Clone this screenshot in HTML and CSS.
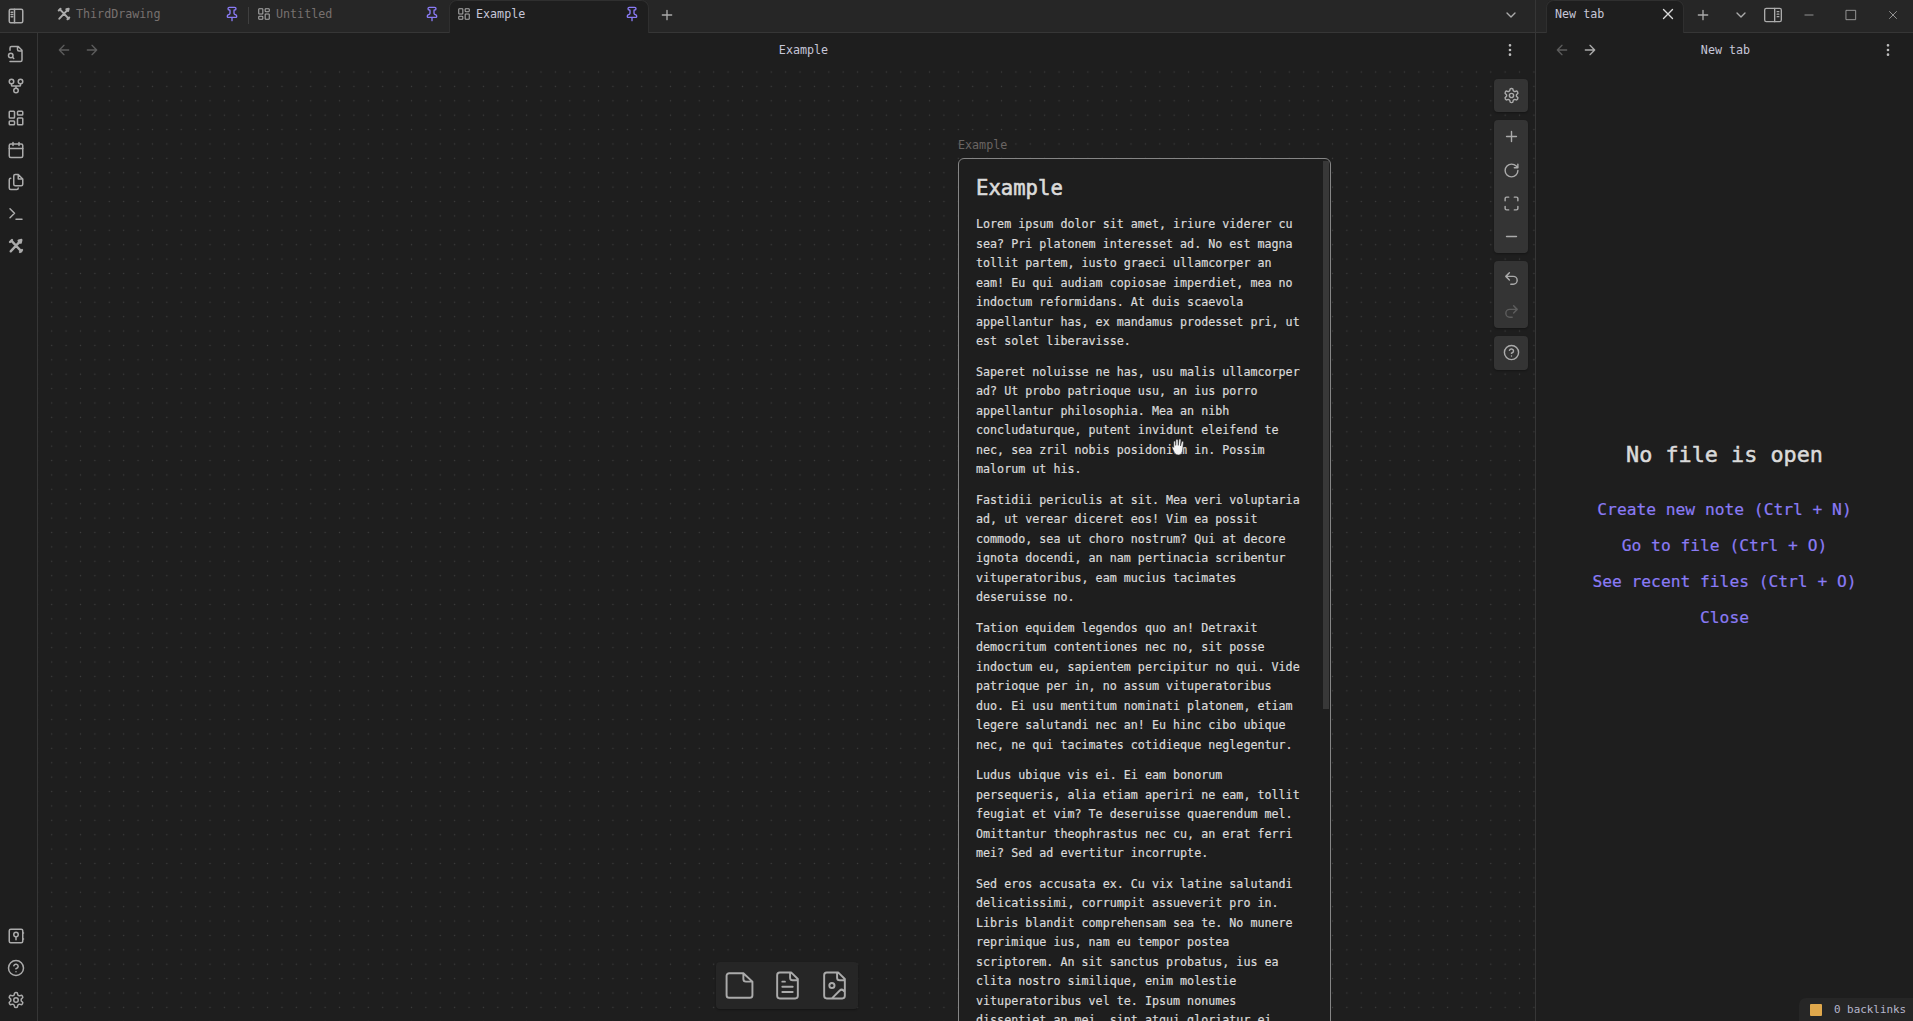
FILE: index.html
```html
<!DOCTYPE html>
<html lang="en">
<head>
    <meta charset="UTF-8">
    <title>Example</title>
    <link rel="stylesheet" href="styles.css">
</head>
<body>
<svg class="defs" width="0" height="0">
    <symbol id="i-sidebar" viewBox="0 0 24 24"><rect x="3" y="3" width="18" height="18" rx="2"/><path d="M10 3v18M5.500 7h2M5.500 10h2M5.500 13h2"/></symbol>
    <symbol id="i-sidebar-r" viewBox="0 0 24 24"><rect x="2" y="4" width="20" height="16" rx="2"/><path d="M14 4v16M17 8h2M17 11h2M17 14h2"/></symbol>
    <symbol id="i-draw" viewBox="0 0 24 24"><path d="M5 4l15 16M19 4L4 20M3 6l3-3M18 21l3-3M16 4l4-1-1 4"/></symbol>
    <symbol id="i-dash" viewBox="0 0 24 24"><rect x="3" y="3" width="7" height="9" rx="1"/><rect x="14" y="3" width="7" height="5" rx="1"/><rect x="14" y="12" width="7" height="9" rx="1"/><rect x="3" y="16" width="7" height="5" rx="1"/></symbol>
    <symbol id="i-pin" viewBox="0 0 24 24"><path d="M12 17v5M9 10.760a2 2 0 0 1-1.110 1.790l-1.780.9A2 2 0 0 0 5 15.240V16a1 1 0 0 0 1 1h12a1 1 0 0 0 1-1v-.76a2 2 0 0 0-1.110-1.790l-1.780-.9A2 2 0 0 1 15 10.760V7a1 1 0 0 1 1-1 2 2 0 0 0 0-4H8a2 2 0 0 0 0 4 1 1 0 0 1 1 1z"/></symbol>
    <symbol id="i-plus" viewBox="0 0 24 24"><path d="M5 12h14M12 5v14"/></symbol>
    <symbol id="i-minus" viewBox="0 0 24 24"><path d="M5 12h14"/></symbol>
    <symbol id="i-x" viewBox="0 0 24 24"><path d="M18 6L6 18M6 6l12 12"/></symbol>
    <symbol id="i-square" viewBox="0 0 24 24"><rect x="4" y="4" width="16" height="16"/></symbol>
    <symbol id="i-chevron" viewBox="0 0 24 24"><path d="M6 9l6 6 6-6"/></symbol>
    <symbol id="i-left" viewBox="0 0 24 24"><path d="M12 19l-7-7 7-7M19 12H5"/></symbol>
    <symbol id="i-right" viewBox="0 0 24 24"><path d="M5 12h14M12 5l7 7-7 7"/></symbol>
    <symbol id="i-more" viewBox="0 0 24 24"><circle cx="12" cy="5" r="1"/><circle cx="12" cy="12" r="1"/><circle cx="12" cy="19" r="1"/></symbol>
    <symbol id="i-filesearch" viewBox="0 0 24 24"><path d="M4 22h14a2 2 0 0 0 2-2V7l-5-5H6a2 2 0 0 0-2 2v3M14 2v4a2 2 0 0 0 2 2h4M9 18l-1.500-1.500"/><circle cx="5" cy="14" r="3"/></symbol>
    <symbol id="i-fork" viewBox="0 0 24 24"><circle cx="12" cy="18" r="3"/><circle cx="6" cy="6" r="3"/><circle cx="18" cy="6" r="3"/><path d="M18 9v2c0 .6-.4 1-1 1H7c-.6 0-1-.4-1-1V9M12 12v3"/></symbol>
    <symbol id="i-calendar" viewBox="0 0 24 24"><path d="M8 2v4M16 2v4M3 10h18"/><rect x="3" y="4" width="18" height="18" rx="2"/></symbol>
    <symbol id="i-copy" viewBox="0 0 24 24"><path d="M15 2h-4a2 2 0 0 0-2 2v11a2 2 0 0 0 2 2h8a2 2 0 0 0 2-2V8zM15 2v6h6M5 7a2 2 0 0 0-2 2v11a2 2 0 0 0 2 2h8a2 2 0 0 0 2-2"/></symbol>
    <symbol id="i-terminal" viewBox="0 0 24 24"><path d="M4 17l6-6-6-6M12 19h8"/></symbol>
    <symbol id="i-vault" viewBox="0 0 24 24"><rect x="3" y="3" width="18" height="18" rx="2"/><circle cx="12" cy="10" r="3"/><path d="M12 13v4M21 8h1M21 16h1"/></symbol>
    <symbol id="i-help" viewBox="0 0 24 24"><circle cx="12" cy="12" r="10"/><path d="M9.090 9a3 3 0 0 1 5.830 1c0 2-3 3-3 3M12 17h.01"/></symbol>
    <symbol id="i-gear" viewBox="0 0 24 24"><path d="M12.220 2h-.44a2 2 0 0 0-2 2v.18a2 2 0 0 1-1 1.730l-.43.25a2 2 0 0 1-2 0l-.15-.08a2 2 0 0 0-2.730.73l-.22.38a2 2 0 0 0 .73 2.730l.15.1a2 2 0 0 1 1 1.720v.51a2 2 0 0 1-1 1.740l-.15.09a2 2 0 0 0-.73 2.730l.22.38a2 2 0 0 0 2.730.73l.15-.08a2 2 0 0 1 2 0l.43.25a2 2 0 0 1 1 1.730V20a2 2 0 0 0 2 2h.44a2 2 0 0 0 2-2v-.18a2 2 0 0 1 1-1.730l.43-.25a2 2 0 0 1 2 0l.15.08a2 2 0 0 0 2.730-.73l.22-.39a2 2 0 0 0-.73-2.730l-.15-.08a2 2 0 0 1-1-1.740v-.5a2 2 0 0 1 1-1.740l.15-.09a2 2 0 0 0 .73-2.730l-.22-.38a2 2 0 0 0-2.730-.73l-.15.08a2 2 0 0 1-2 0l-.43-.25a2 2 0 0 1-1-1.730V4a2 2 0 0 0-2-2z"/><circle cx="12" cy="12" r="3"/></symbol>
    <symbol id="i-rotate" viewBox="0 0 24 24"><path d="M21 12a9 9 0 1 1-9-9c2.520 0 4.930 1 6.740 2.740L21 8M21 3v5h-5"/></symbol>
    <symbol id="i-fit" viewBox="0 0 24 24"><path d="M8 3H5a2 2 0 0 0-2 2v3M21 8V5a2 2 0 0 0-2-2h-3M3 16v3a2 2 0 0 0 2 2h3M16 21h3a2 2 0 0 0 2-2v-3"/></symbol>
    <symbol id="i-undo" viewBox="0 0 24 24"><path d="M9 14L4 9l5-5M4 9h10.500a5.500 5.500 0 0 1 5.500 5.500 5.500 5.500 0 0 1-5.500 5.500H11"/></symbol>
    <symbol id="i-redo" viewBox="0 0 24 24"><path d="M15 14l5-5-5-5M20 9H9.500A5.500 5.500 0 0 0 4 14.500 5.500 5.500 0 0 0 9.500 20H13"/></symbol>
    <symbol id="i-file" viewBox="0 0 24 24"><path d="M15 2.500H4a2 2 0 0 0-2 2v15a2 2 0 0 0 2 2h16a2 2 0 0 0 2-2V9zM15 2.500V7a2 2 0 0 0 2 2h5"/></symbol>
    <symbol id="i-filetext" viewBox="0 0 24 24"><path d="M15 2H6a2 2 0 0 0-2 2v16a2 2 0 0 0 2 2h12a2 2 0 0 0 2-2V7zM14 2v4a2 2 0 0 0 2 2h4M10 9H8M16 13H8M16 17H8"/></symbol>
    <symbol id="i-fileimage" viewBox="0 0 24 24"><path d="M15 2H6a2 2 0 0 0-2 2v16a2 2 0 0 0 2 2h12a2 2 0 0 0 2-2V7zM14 2v4a2 2 0 0 0 2 2h4M20 17l-1.090-1.090a2 2 0 0 0-2.820 0L10 22"/><circle cx="10" cy="12" r="2"/></symbol>
</svg>

<div class="app">
    <div class="main-col">
        <div class="tabbar">
            <div class="tabbar-toggle"><svg class="ico ico-18"><use href="#i-sidebar"/></svg></div>
            <div class="tab">
                <svg class="ico tab-ico thick"><use href="#i-draw"/></svg>
                <span class="tab-name dim">ThirdDrawing</span>
                <svg class="ico ico-16 pin"><use href="#i-pin"/></svg>
            </div>
            <div class="tab tab-sep">
                <svg class="ico tab-ico"><use href="#i-dash"/></svg>
                <span class="tab-name dim">Untitled</span>
                <svg class="ico ico-16 pin"><use href="#i-pin"/></svg>
            </div>
            <div class="tab active">
                <svg class="ico tab-ico"><use href="#i-dash"/></svg>
                <span class="tab-name">Example</span>
                <svg class="ico ico-16 pin"><use href="#i-pin"/></svg>
            </div>
            <div class="tab-add"><svg class="ico ico-16"><use href="#i-plus"/></svg></div>
            <div class="tabbar-end"><svg class="ico ico-16"><use href="#i-chevron"/></svg></div>
        </div>
        <div class="main-body">
            <div class="ribbon">
                <div class="ribbon-group">
                    <div class="ribbon-btn"><svg class="ico ico-18"><use href="#i-filesearch"/></svg></div>
                    <div class="ribbon-btn"><svg class="ico ico-18"><use href="#i-fork"/></svg></div>
                    <div class="ribbon-btn"><svg class="ico ico-18"><use href="#i-dash"/></svg></div>
                    <div class="ribbon-btn"><svg class="ico ico-18"><use href="#i-calendar"/></svg></div>
                    <div class="ribbon-btn"><svg class="ico ico-18"><use href="#i-copy"/></svg></div>
                    <div class="ribbon-btn"><svg class="ico ico-18"><use href="#i-terminal"/></svg></div>
                    <div class="ribbon-btn"><svg class="ico ico-16 thick"><use href="#i-draw"/></svg></div>
                </div>
                <div class="ribbon-group">
                    <div class="ribbon-btn"><svg class="ico ico-18"><use href="#i-vault"/></svg></div>
                    <div class="ribbon-btn"><svg class="ico ico-18"><use href="#i-help"/></svg></div>
                    <div class="ribbon-btn"><svg class="ico ico-18"><use href="#i-gear"/></svg></div>
                </div>
            </div>
            <div class="view main-view">
                <div class="view-head">
                    <div class="nav">
                        <svg class="ico ico-16 faint"><use href="#i-left"/></svg>
                        <svg class="ico ico-16 faint"><use href="#i-right"/></svg>
                    </div>
                    <div class="view-title">Example</div>
                    <svg class="ico ico-16 more"><use href="#i-more"/></svg>
                </div>
                <div class="canvas">
                    <div class="node">
                        <div class="node-label">Example</div>
                        <div class="card">
                            <div class="scroll-thumb"></div>
                            <h1>Example</h1>
                            <p>Lorem ipsum dolor sit amet, iriure viderer cu sea? Pri platonem interesset ad. No est magna tollit partem, iusto graeci ullamcorper an eam! Eu qui audiam copiosae imperdiet, mea no indoctum reformidans. At duis scaevola appellantur has, ex mandamus prodesset pri, ut est solet liberavisse.</p>
                            <p>Saperet noluisse ne has, usu malis ullamcorper ad? Ut probo patrioque usu, an ius porro appellantur philosophia. Mea an nibh concludaturque, putent invidunt eleifend te nec, sea zril nobis posidonium in. Possim malorum ut his.</p>
                            <p>Fastidii periculis at sit. Mea veri voluptaria ad, ut verear diceret eos! Vim ea possit commodo, sea ut choro nostrum? Qui at decore ignota docendi, an nam pertinacia scribentur vituperatoribus, eam mucius tacimates deseruisse no.</p>
                            <p>Tation equidem legendos quo an! Detraxit democritum contentiones nec no, sit posse indoctum eu, sapientem percipitur no qui. Vide patrioque per in, no assum vituperatoribus duo. Ei usu mentitum nominati platonem, etiam legere salutandi nec an! Eu hinc cibo ubique nec, ne qui tacimates cotidieque neglegentur.</p>
                            <p>Ludus ubique vis ei. Ei eam bonorum persequeris, alia etiam aperiri ne eam, tollit feugiat et vim? Te deseruisse quaerendum mel. Omittantur theophrastus nec cu, an erat ferri mei? Sed ad evertitur incorrupte.</p>
                            <p>Sed eros accusata ex. Cu vix latine salutandi delicatissimi, corrumpit assueverit pro in. Libris blandit comprehensam sea te. No munere reprimique ius, nam eu tempor postea scriptorem. An sit sanctus probatus, ius ea clita nostro similique, enim molestie vituperatoribus vel te. Ipsum nonumes dissentiet an mei, sint atqui gloriatur ei</p>
                        </div>
                    </div>

                    <div class="controls">
                        <div class="ctrl-group"><div class="ctrl"><svg class="ico ico-17"><use href="#i-gear"/></svg></div></div>
                        <div class="ctrl-group">
                            <div class="ctrl"><svg class="ico ico-17"><use href="#i-plus"/></svg></div>
                            <div class="ctrl"><svg class="ico ico-17"><use href="#i-rotate"/></svg></div>
                            <div class="ctrl"><svg class="ico ico-17"><use href="#i-fit"/></svg></div>
                            <div class="ctrl"><svg class="ico ico-17"><use href="#i-minus"/></svg></div>
                        </div>
                        <div class="ctrl-group">
                            <div class="ctrl ctrl-half"><svg class="ico ico-17"><use href="#i-undo"/></svg></div>
                            <div class="ctrl ctrl-half"><svg class="ico ico-17 faint"><use href="#i-redo"/></svg></div>
                        </div>
                        <div class="ctrl-group"><div class="ctrl"><svg class="ico ico-17"><use href="#i-help"/></svg></div></div>
                    </div>

                    <div class="cards-bar">
                        <svg class="ico ico-31"><use href="#i-file"/></svg>
                        <svg class="ico ico-31"><use href="#i-filetext"/></svg>
                        <svg class="ico ico-31"><use href="#i-fileimage"/></svg>
                    </div>

                    <svg class="hand" viewBox="0 0 14 17">
                        <path d="M2.500 7V3.500a1 1 0 0 1 1.800 0V7l.3-5.200a1 1 0 0 1 1.900 0L6.800 7l.6-5.500a1 1 0 0 1 1.900.2L8.900 7.500l1-4a1 1 0 0 1 1.800.4L10.900 11c-.2 2.500-1.300 5-4 5-2.500 0-3.500-1.500-4.400-3.500L1 9.500c-.4-1 1-1.700 1.500-.6z"/>
                    </svg>
                </div>
            </div>
        </div>
    </div>

    <div class="side-col">
        <div class="tabbar tabbar-side">
            <div class="tab active tab-new">
                <span class="tab-name">New tab</span>
                <svg class="ico ico-18 tab-close"><use href="#i-x"/></svg>
            </div>
            <div class="win-btns">
                <svg class="ico ico-16"><use href="#i-plus"/></svg>
                <svg class="ico ico-16 win-chevron"><use href="#i-chevron"/></svg>
                <svg class="ico ico-20 win-panel"><use href="#i-sidebar-r"/></svg>
                <svg class="ico ico-14 thin win-min"><use href="#i-minus"/></svg>
                <svg class="ico ico-14 thin win-max"><use href="#i-square"/></svg>
                <svg class="ico ico-14 thin win-max"><use href="#i-x"/></svg>
            </div>
        </div>
        <div class="view side-view">
            <div class="view-head">
                <div class="nav">
                    <svg class="ico ico-16 faint"><use href="#i-left"/></svg>
                    <svg class="ico ico-16"><use href="#i-right"/></svg>
                </div>
                <div class="view-title">New tab</div>
                <svg class="ico ico-16 more"><use href="#i-more"/></svg>
            </div>
            <div class="empty">
                <div class="empty-title">No file is open</div>
                <a class="empty-link">Create new note (Ctrl + N)</a>
                <a class="empty-link">Go to file (Ctrl + O)</a>
                <a class="empty-link">See recent files (Ctrl + O)</a>
                <a class="empty-link">Close</a>
            </div>
            <div class="status"><span class="status-square"></span>0 backlinks</div>
        </div>
    </div>
</div>
</body>
</html>
```

FILE: styles.css
```css
* {
    box-sizing: border-box;
}
html, body {
    margin: 0;
    height: 100%;
    overflow: hidden;
}
body {
    background: #1e1e1e;
    color: #dadada;
    font-family: "DejaVu Sans Mono", "Liberation Mono", monospace;
    font-size: 11.700px;
}
.defs {
    position: absolute;
}

/* icons */
.ico {
    display: block;
    flex: none;
    fill: none;
    stroke: #ababab;
    stroke-width: 2;
    stroke-linecap: round;
    stroke-linejoin: round;
}
.ico-14 { width: 14px; height: 14px; }
.ico-16 { width: 16px; height: 16px; }
.ico-17 { width: 17px; height: 17px; }
.ico-18 { width: 18px; height: 18px; }
.ico-20 { width: 20px; height: 20px; stroke-width: 1.600; }
.ico-31 { width: 31px; height: 31px; stroke-width: 1.500; }
.thick { stroke-width: 3.500; }
.thin { stroke-width: 1.400; }
.faint { stroke: #5c5c5c; }
.pin { stroke: #8a7bf5; }

.app {
    display: flex;
    height: 100vh;
}
.main-col {
    width: 1536px;
    display: flex;
    flex-direction: column;
    border-right: 1px solid #363636;
}
.side-col {
    flex: 1;
    min-width: 0;
    display: flex;
    flex-direction: column;
}

/* tabs */
.tabbar {
    height: 33px;
    flex: none;
    display: flex;
    align-items: flex-end;
    background: #262626;
    border-bottom: 1px solid #363636;
}
.tabbar-toggle {
    width: 32px;
    height: 32px;
    display: flex;
    align-items: center;
    justify-content: center;
    margin-right: 17px;
}
.tab {
    width: 200px;
    height: 33px;
    margin-bottom: -1px;
    padding: 0 9px 5px 8px;
    display: flex;
    align-items: center;
    gap: 5px;
    position: relative;
}
.tab-ico {
    width: 14px;
    height: 14px;
    stroke-width: 1.800;
}
.tab-ico.thick {
    stroke-width: 3.500;
}
.tab-name {
    flex: 1;
    min-width: 0;
    color: #c6c6d8;
}
.tab-name.dim {
    color: #77716f;
}
.tab-sep::before {
    content: "";
    position: absolute;
    left: -1px;
    top: 7px;
    height: 17px;
    border-left: 1px solid #3f3f3f;
}
.tab.active {
    background: #1e1e1e;
    border-radius: 8px 8px 0 0;
    box-shadow: inset 1px 0 0 #2f2f2f, inset -1px 0 0 #2f2f2f, inset 0 1px 0 #2f2f2f;
}
.tab-add {
    width: 36px;
    height: 32px;
    padding-bottom: 2px;
    display: flex;
    align-items: center;
    justify-content: center;
}
.tabbar-end {
    margin-left: auto;
    width: 48px;
    height: 32px;
    padding-bottom: 2px;
    display: flex;
    align-items: center;
    justify-content: center;
}
.tabbar-side {
    padding-left: 10px;
}
.tab-new {
    width: 138px;
    padding: 0 7px 5px 9px;
}
.tab-close {
    stroke: #dadada;
    stroke-width: 1.800;
}
.win-btns {
    flex: 1;
    height: 32px;
    padding: 0 0 3px 11px;
    display: flex;
    align-items: center;
}
.win-chevron { margin-left: 22px; }
.win-panel { margin-left: 14px; }
.win-min { margin-left: 19px; }
.win-max { margin-left: 28px; }

/* ribbon */
.main-body {
    flex: 1;
    min-height: 0;
    display: flex;
}
.ribbon {
    width: 38px;
    flex: none;
    display: flex;
    flex-direction: column;
    justify-content: space-between;
    padding: 5px 0;
    border-right: 1px solid #363636;
}
.ribbon-btn {
    height: 32px;
    padding-right: 5px;
    display: flex;
    align-items: center;
    justify-content: center;
}

/* views */
.view {
    flex: 1;
    min-width: 0;
    display: flex;
    flex-direction: column;
    position: relative;
}
.view-head {
    height: 34px;
    flex: none;
    padding: 0 17px 0 18px;
    display: flex;
    align-items: center;
}
.nav {
    display: flex;
    gap: 12px;
}
.view-title {
    flex: 1;
    text-align: center;
    color: #c6c6d8;
}
.main-view .view-title {
    padding-left: 5px;
}
.side-view .view-title {
    padding-right: 27px;
}
.more {
    stroke: #bdbdbd;
}
.canvas {
    flex: 1;
    min-height: 0;
    position: relative;
    overflow: hidden;
    background-color: #1e1e1e;
    background-image: radial-gradient(circle at center, #3e3e3e 0.700px, transparent 1px);
    background-size: 14.400px 14.400px;
    background-position: 6.500px -2.200px;
}
.node {
    position: absolute;
    left: 920px;
    top: 70px;
    width: 373px;
}
.node-label {
    height: 16px;
    line-height: 16px;
    margin-bottom: 5px;
    color: #6a6563;
}
.card {
    position: relative;
    height: 1000px;
    padding: 15px 16px 0 17px;
    background: #1e1e1e;
    border: 1.500px solid #858585;
    border-radius: 6px;
    -webkit-text-stroke: 0.200px;
}
.scroll-thumb {
    position: absolute;
    right: 1px;
    top: 2px;
    width: 6px;
    height: 548px;
    background: #383838;
}
.card h1 {
    margin: 0 0 13px;
    font-size: 20.600px;
    line-height: 28px;
    font-weight: normal;
    -webkit-text-stroke: 0.600px;
}
.card p {
    width: 328px;
    margin: 0 0 11px;
    line-height: 19.500px;
}

/* canvas controls */
.controls {
    position: absolute;
    right: 7px;
    top: 12px;
    width: 34px;
    display: flex;
    flex-direction: column;
    gap: 8px;
}
.ctrl-group {
    background: #343434;
    border-radius: 4px;
    box-shadow: 0 1px 2px rgba(0, 0, 0, 0.3);
}
.ctrl {
    height: 33.250px;
    display: flex;
    align-items: center;
    justify-content: center;
}
.ctrl-half {
    height: 33.500px;
}
.ctrl-group:only-child .ctrl {
    height: 34px;
}
.cards-bar {
    position: absolute;
    left: 678px;
    top: 895px;
    width: 142px;
    height: 47px;
    padding: 0 8px;
    display: flex;
    align-items: center;
    justify-content: space-between;
    background: #262626;
    border-radius: 4px;
    box-shadow: 0 1px 2px rgba(0, 0, 0, 0.3);
}
.hand {
    position: absolute;
    left: 1133px;
    top: 371px;
    width: 15px;
    height: 18px;
    fill: #f4f4f4;
    stroke: #222;
    stroke-width: 0.500;
}

/* empty pane */
.empty {
    flex: 1;
    padding-top: 371px;
    display: flex;
    flex-direction: column;
    align-items: center;
    -webkit-text-stroke: 0.200px;
}
.empty-title {
    font-size: 21.800px;
    line-height: 34px;
    margin-bottom: 20px;
    -webkit-text-stroke: 0.500px;
}
.empty-link {
    font-size: 16.250px;
    line-height: 36px;
    color: #8a7bf5;
}
.status {
    position: absolute;
    right: 0;
    bottom: 0;
    width: 114px;
    height: 23px;
    padding-left: 11px;
    display: flex;
    align-items: center;
    gap: 12px;
    font-size: 10.900px;
    color: #b6b6cc;
    background: #262626;
    border-radius: 7px 0 0 0;
}
.status-square {
    width: 12px;
    height: 12px;
    background: #e0a84c;
    border-radius: 1px;
}
```
